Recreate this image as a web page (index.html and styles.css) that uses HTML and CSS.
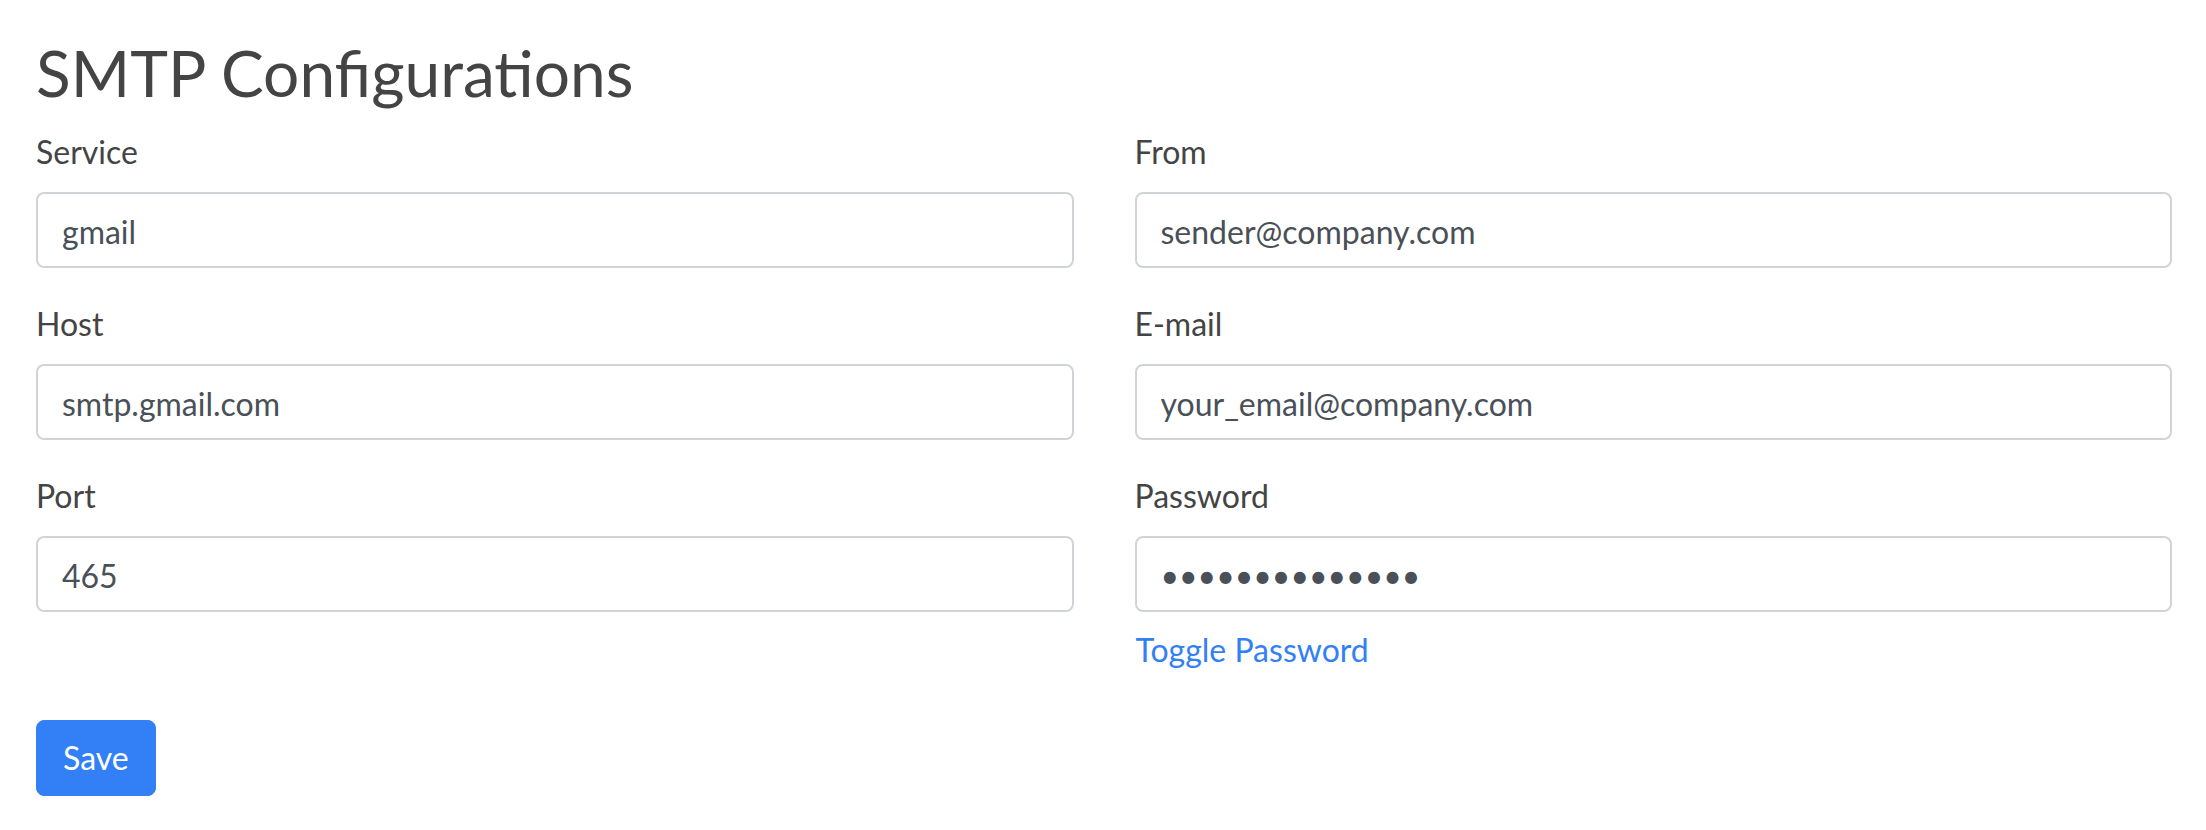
FILE: index.html
```html
<!DOCTYPE html>
<html lang="en">
<head>
<meta charset="utf-8">
<title>SMTP Configurations</title>
<link rel="stylesheet" href="styles.css">
</head>
<body>
<main class="page">
  <h2 class="title">SMTP Configurations</h2>
  <form class="form">
    <div class="grid">
      <div class="col">
        <div class="group">
          <label class="label" for="service">Service</label>
          <input class="input" id="service" type="text" value="gmail">
        </div>
        <div class="group">
          <label class="label" for="host">Host</label>
          <input class="input" id="host" type="text" value="smtp.gmail.com">
        </div>
        <div class="group">
          <label class="label" for="port">Port</label>
          <input class="input" id="port" type="text" value="465">
        </div>
      </div>
      <div class="col">
        <div class="group">
          <label class="label" for="from">From</label>
          <input class="input" id="from" type="text" value="sender@company.com">
        </div>
        <div class="group">
          <label class="label" for="email">E-mail</label>
          <input class="input" id="email" type="text" value="your_email@company.com">
        </div>
        <div class="group">
          <label class="label" for="password">Password</label>
          <input class="input" id="password" type="password" value="secretpassword">
          <button class="toggle" type="button">Toggle Password</button>
        </div>
      </div>
    </div>
    <button class="save" type="button">Save</button>
  </form>
</main>
</body>
</html>
```
FILE: styles.css
```css
html, body {
  margin: 0;
  padding: 0;
  background: #ffffff;
}

body {
  font-family: Lato, "Open Sans", "Liberation Sans", sans-serif;
  font-size: 32px;
  line-height: 1.5;
  color: #444444;
}

.page {
  padding: 35px 34px 0 36px;
}

.title {
  margin: 0 0 16px 0;
  font-size: 64px;
  font-weight: 400;
  line-height: 1.2;
  color: #444444;
}

.form {
  margin: 0;
}

.grid {
  display: grid;
  grid-template-columns: 1fr 1fr;
  column-gap: 61px;
}

.col {
  display: flex;
  flex-direction: column;
}

.group {
  display: flex;
  flex-direction: column;
  align-items: flex-start;
  margin-bottom: 32px;
}

.label {
  display: block;
  margin-bottom: 16px;
  line-height: 48px;
}

.input {
  box-sizing: border-box;
  display: block;
  width: 100%;
  height: 76px;
  margin: 0;
  padding: 14px 24px 10px 24px;
  font-family: inherit;
  font-size: 32px;
  line-height: 48px;
  color: #495057;
  background: #ffffff;
  border: 2px solid #d0d4d9;
  border-radius: 8px;
  outline: none;
}

.toggle {
  box-sizing: border-box;
  height: 76px;
  margin: 0;
  padding: 12px 0;
  border: 1px solid transparent;
  background: transparent;
  font-family: inherit;
  font-size: 32px;
  line-height: 48px;
  color: #3380f5;
  cursor: pointer;
}

.save {
  box-sizing: border-box;
  height: 76px;
  margin: 0;
  padding: 12px 26px;
  border: 1px solid #3380f6;
  border-radius: 8px;
  background: #3380f6;
  font-family: inherit;
  font-size: 32px;
  line-height: 48px;
  color: #ffffff;
  cursor: pointer;
}
```
